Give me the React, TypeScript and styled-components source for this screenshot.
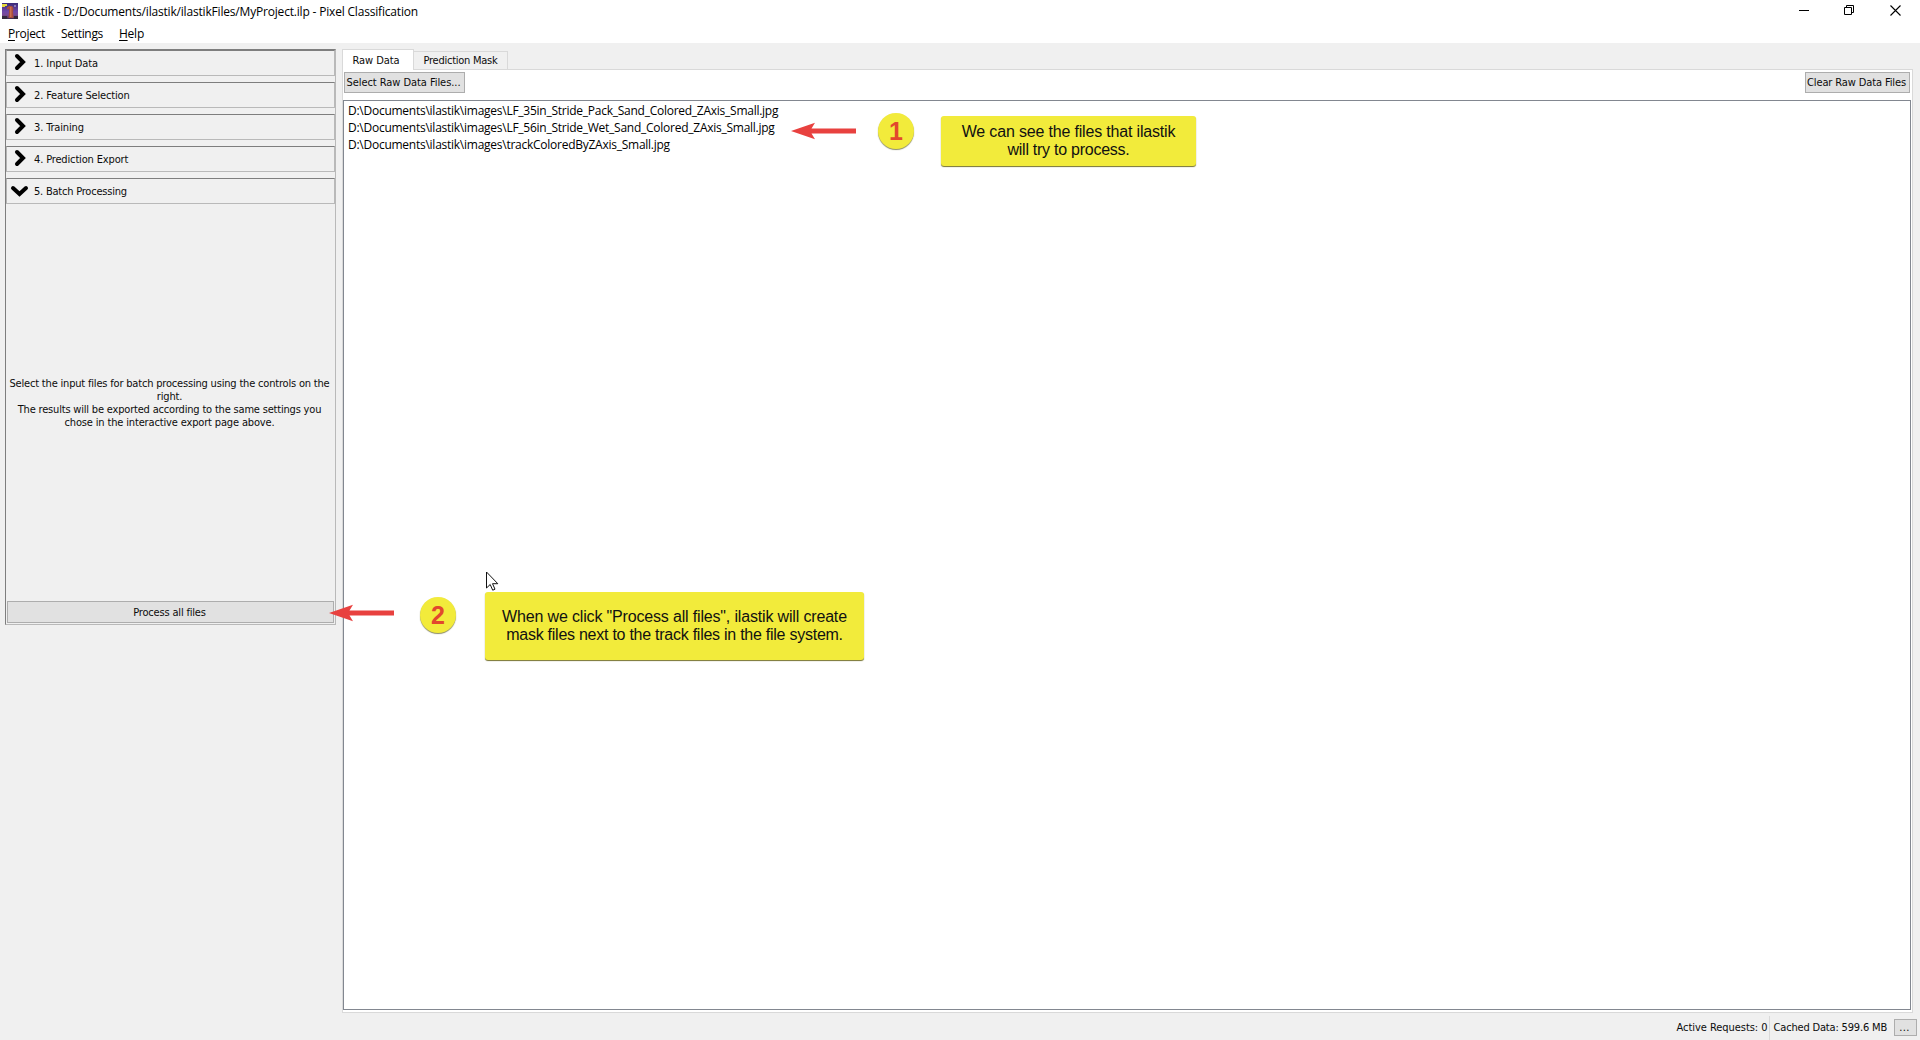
import React from "react";
import styled, { createGlobalStyle, css } from "styled-components";

const Global = createGlobalStyle`
  * { box-sizing: border-box; }
  body { margin: 0; background: #f0f0f0; overflow: hidden; }
`;

const controlFont = css`
  font-family: "DejaVu Sans Condensed", "DejaVu Sans", sans-serif;
  font-stretch: condensed;
  font-size: 11px;
  color: #0c0c0c;
`;

const systemFont = css`
  font-family: "Open Sans", "Noto Sans", sans-serif;
  font-stretch: normal;
  font-size: 12px;
  color: #000;
`;

const Label = styled.span<{ $ls?: number }>`
  letter-spacing: ${(p) => p.$ls ?? 0}px;
  white-space: pre;
`;

const Window = styled.div`
  position: relative;
  width: 1920px;
  height: 1040px;
  display: flex;
  flex-direction: column;
  background: #f0f0f0;
  overflow: hidden;
`;

const TitleBar = styled.header`
  ${systemFont}
  height: 23px;
  flex: none;
  display: flex;
  align-items: center;
  gap: 5px;
  padding-left: 2px;
  background: #fff;
`;

const AppIcon = styled.svg`
  display: block;
  width: 16px;
  height: 16px;
  margin-top: -1px;
`;

const WindowControls = styled.div`
  display: flex;
  margin-left: auto;
  padding: 0 2px 3px 0;
`;

const WindowButton = styled.div`
  width: 46px;
  height: 20px;
  display: grid;
  place-items: center;
  svg { display: block; }
`;

const MenuBar = styled.nav`
  ${systemFont}
  height: 20px;
  flex: none;
  display: flex;
  padding-left: 8px;
  background: #fff;
`;

const MenuItem = styled.div<{ $w: number }>`
  width: ${(p) => p.$w}px;
  line-height: 21px;
  u { text-underline-offset: 2px; text-decoration-thickness: 1px; text-decoration-skip-ink: none; }
`;

const Main = styled.main`
  flex: 1;
  min-height: 0;
  display: flex;
  padding: 6px 7px 0 5px;
  gap: 6px;
`;

const Sidebar = styled.aside`
  ${controlFont}
  width: 331px;
  height: 576px;
  flex: none;
  display: flex;
  flex-direction: column;
  gap: 6px;
  border: 1px solid;
  border-color: #7e7e7e #b9b9b9 #b9b9b9 #7e7e7e;
`;

const AppletHeader = styled.div`
  height: 26px;
  flex: none;
  display: flex;
  align-items: center;
  padding-top: 1px;
  border: 1px solid;
  border-color: #7e7e7e #b9b9b9 #b9b9b9 #b4b4b4;
`;

const Chevron = styled.svg`
  width: 27px;
  height: 22px;
  margin-top: -4px;
  fill: none;
  stroke: #000;
  stroke-width: 4;
  stroke-linecap: round;
  stroke-linejoin: miter;
`;

const AppletBody = styled.div`
  flex: 1;
  display: flex;
  flex-direction: column;
  padding: 0 1px 1px;
`;

const Description = styled.div`
  flex: 1;
  display: flex;
  flex-direction: column;
  align-items: center;
  justify-content: center;
  line-height: 13px;
  padding: 0 2px 5px 0;
`;

const PushButton = styled.div<{ $w?: number; $h: number }>`
  ${controlFont}
  width: ${(p) => (p.$w ? p.$w + "px" : "auto")};
  height: ${(p) => p.$h}px;
  flex: none;
  display: flex;
  align-items: center;
  justify-content: center;
  padding-right: 2px;
  background: #e1e1e1;
  border: 1px solid #adadad;
`;

const Workspace = styled.section`
  ${controlFont}
  flex: 1;
  height: 964px;
  display: flex;
  flex-direction: column;
`;

const TabBar = styled.div`
  height: 20px;
  flex: none;
  display: flex;
  align-items: flex-end;
`;

const Tab = styled.div<{ $w: number; $active?: boolean }>`
  width: ${(p) => p.$w}px;
  height: ${(p) => (p.$active ? 21 : 18)}px;
  margin-bottom: ${(p) => (p.$active ? -1 : 0)}px;
  padding-right: ${(p) => (p.$active ? 4 : 0)}px;
  display: flex;
  align-items: center;
  justify-content: center;
  position: relative;
  z-index: 1;
  background: ${(p) => (p.$active ? "#fff" : "#f0f0f0")};
  border: 1px solid #d9d9d9;
  border-bottom: 0;
  border-left-width: ${(p) => (p.$active ? 1 : 0)}px;
`;

const Pane = styled.div`
  flex: 1;
  display: flex;
  flex-direction: column;
  gap: 7px;
  padding: 2px 1px 2px 0;
  background: #fff;
  border: 1px solid #d9d9d9;
`;

const Toolbar = styled.div`
  display: flex;
  justify-content: space-between;
  padding: 0 1px 0 1px;
`;

const FileList = styled.div`
  ${systemFont}
  flex: 1;
  padding: 1px 4px;
  background: #fff;
  border: 1px solid #828790;
`;

const FileRow = styled.div`
  height: 17px;
  line-height: 17px;
`;

const StatusBar = styled.footer`
  ${controlFont}
  height: 25px;
  flex: none;
  display: flex;
  align-items: center;
  justify-content: flex-end;
  padding-right: 3px;
`;

const Separator = styled.div`
  width: 1px;
  height: 24px;
  margin: 0 4px 0 1px;
  background: #d9d9d9;
`;

const Gap = styled.div`
  width: 7px;
`;

const annotation = css<{ $x: number; $y: number }>`
  position: absolute;
  left: ${(p) => p.$x}px;
  top: ${(p) => p.$y}px;
  z-index: 2;
`;

const Callout = styled.div<{ $x: number; $y: number; $w: number; $h: number }>`
  ${annotation}
  width: ${(p) => p.$w}px;
  height: ${(p) => p.$h}px;
  display: flex;
  flex-direction: column;
  align-items: center;
  padding-top: ${(p) => (p.$h > 60 ? 16 : 7)}px;
  font: 16px/18px "Liberation Sans", Arial, sans-serif;
  color: #111;
  background: #f2eb3b;
  border-radius: 3px;
  box-shadow: 0 1px 1px #77742f;
`;

const Badge = styled.div<{ $x: number; $y: number }>`
  ${annotation}
  width: 36px;
  height: 36px;
  border-radius: 50%;
  display: grid;
  place-items: center;
  font: bold 25px/36px "Liberation Sans", Arial, sans-serif;
  color: #e2482d;
  background: #f2eb3b;
  box-shadow: 0 1px 1px #8b8b62;
`;

const ArrowSvg = styled.svg<{ $x: number; $y: number }>`
  ${annotation}
  display: block;
`;

const Arrow = ({ x, y }: { x: number; y: number }) => (
  <ArrowSvg $x={x} $y={y} width="66" height="18" viewBox="0 0 66 18">
    <path d="M0 9 24 .7 20.5 6.6H65V11.4H20.5L24 17.3Z" fill="#e8413f" />
  </ArrowSvg>
);

const applets = [
  { name: "1. Input Data", ls: -0.08 },
  { name: "2. Feature Selection", ls: -0.15 },
  { name: "3. Training", ls: -0.15 },
  { name: "4. Prediction Export", ls: -0.15 },
  { name: "5. Batch Processing", ls: -0.22, open: true },
];

const files = [
  "D:\\Documents\\ilastik\\images\\LF_35in_Stride_Pack_Sand_Colored_ZAxis_Small.jpg",
  "D:\\Documents\\ilastik\\images\\LF_56in_Stride_Wet_Sand_Colored_ZAxis_Small.jpg",
  "D:\\Documents\\ilastik\\images\\trackColoredByZAxis_Small.jpg",
];

export default function App() {
  return (
    <Window>
      <Global />
      <TitleBar>
        <AppIcon viewBox="0 0 16 16">
          <defs>
            <linearGradient id="sky" x1="0" y1="0" x2="0" y2="1">
              <stop offset="0" stopColor="#3a2a78" />
              <stop offset=".55" stopColor="#7048a8" />
              <stop offset=".75" stopColor="#7a4a94" />
              <stop offset="1" stopColor="#3a2848" />
            </linearGradient>
          </defs>
          <rect width="16" height="16" fill="url(#sky)" />
          <path d="M0 1h5v2H3v1H0z" fill="#e5d83c" />
          <path d="M12 2h2v2h-2z" fill="#8b78b5" />
          <path d="M5 4.5 7 3h3l1.500 2L11 9l.5 6h-5L7 9V6L5 6.500z" fill="#a84d3d" />
          <path d="M8 4h1.500v10H8z" fill="#cb7050" />
          <path d="M0 13h5v3H0zM12 13h4v3h-4z" fill="#33283a" />
        </AppIcon>
        <Label $ls={-0.185}>ilastik - D:/Documents/ilastik/ilastikFiles/MyProject.ilp - Pixel Classification</Label>
        <WindowControls>
          <WindowButton>
            <svg width="11" height="11"><path d="M1 5.500h10" stroke="#000" /></svg>
          </WindowButton>
          <WindowButton>
            <svg width="11" height="11" fill="none" stroke="#000"><path d="M.5 2.500h7v7h-7zM2.500 2.500v-2h7v7h-2" /></svg>
          </WindowButton>
          <WindowButton>
            <svg width="11" height="11"><path d="M.5.5l10 10M10.500.5l-10 10" stroke="#000" strokeWidth="1.1" /></svg>
          </WindowButton>
        </WindowControls>
      </TitleBar>
      <MenuBar>
        <MenuItem $w={53}><Label $ls={-0.3}><u>P</u>roject</Label></MenuItem>
        <MenuItem $w={58}><Label $ls={-0.31}>Settings</Label></MenuItem>
        <MenuItem $w={40}><Label $ls={-0.24}><u>H</u>elp</Label></MenuItem>
      </MenuBar>
      <Main>
        <Sidebar>
          {applets.map((a) => (
            <AppletHeader key={a.name}>
              <Chevron viewBox="0 0 27 22">
                <path d={a.open ? "M6 9l6.500 6 6.500-6" : "M10 5l6 6-6 6"} />
              </Chevron>
              <Label $ls={a.ls}>{a.name}</Label>
            </AppletHeader>
          ))}
          <AppletBody>
            <Description>
              <Label $ls={-0.186}>Select the input files for batch processing using the controls on the</Label>
              <Label $ls={-0.18}>right.</Label>
              <Label $ls={-0.188}>The results will be exported according to the same settings you</Label>
              <Label $ls={-0.151}>chose in the interactive export page above.</Label>
            </Description>
            <PushButton $h={22}><Label $ls={-0.181}>Process all files</Label></PushButton>
          </AppletBody>
        </Sidebar>
        <Workspace>
          <TabBar>
            <Tab $w={72} $active><Label $ls={-0.07}>Raw Data</Label></Tab>
            <Tab $w={94}><Label $ls={-0.25}>Prediction Mask</Label></Tab>
          </TabBar>
          <Pane>
            <Toolbar>
              <PushButton $w={121} $h={21}><Label $ls={-0.06}>Select Raw Data Files...</Label></PushButton>
              <PushButton $w={105} $h={21}><Label $ls={-0.118}>Clear Raw Data Files</Label></PushButton>
            </Toolbar>
            <FileList>
              {files.map((f) => (
                <FileRow key={f}><Label $ls={-0.255}>{f}</Label></FileRow>
              ))}
            </FileList>
          </Pane>
        </Workspace>
      </Main>
      <StatusBar>
        <Label $ls={-0.045}>Active Requests: 0</Label>
        <Separator />
        <Label $ls={-0.172}>Cached Data: 599.6 MB</Label>
        <Gap />
        <PushButton $w={23} $h={17}><Label $ls={0.3}>...</Label></PushButton>
      </StatusBar>

      <Arrow x={791} y={122} />
      <Badge $x={878} $y={113}>1</Badge>
      <Callout $x={941} $y={116} $w={255} $h={50}>
        <Label $ls={-0.175}>We can see the files that ilastik</Label>
        <Label $ls={-0.257}>will try to process.</Label>
      </Callout>

      <Arrow x={329} y={604} />
      <Badge $x={420} $y={597}>2</Badge>
      <Callout $x={485} $y={592} $w={379} $h={68}>
        <Label $ls={-0.165}>{'When we click "Process all files", ilastik will create'}</Label>
        <Label $ls={-0.255}>mask files next to the track files in the file system.</Label>
      </Callout>
      <ArrowSvg $x={486} $y={571} width="13" height="20" viewBox="0 0 13 20">
        <path d="M.5 1v16l3.700-3.500 2.500 5.700 2.300-1-2.500-5.500h5.300z" fill="#fff" stroke="#111" />
      </ArrowSvg>
    </Window>
  );
}
